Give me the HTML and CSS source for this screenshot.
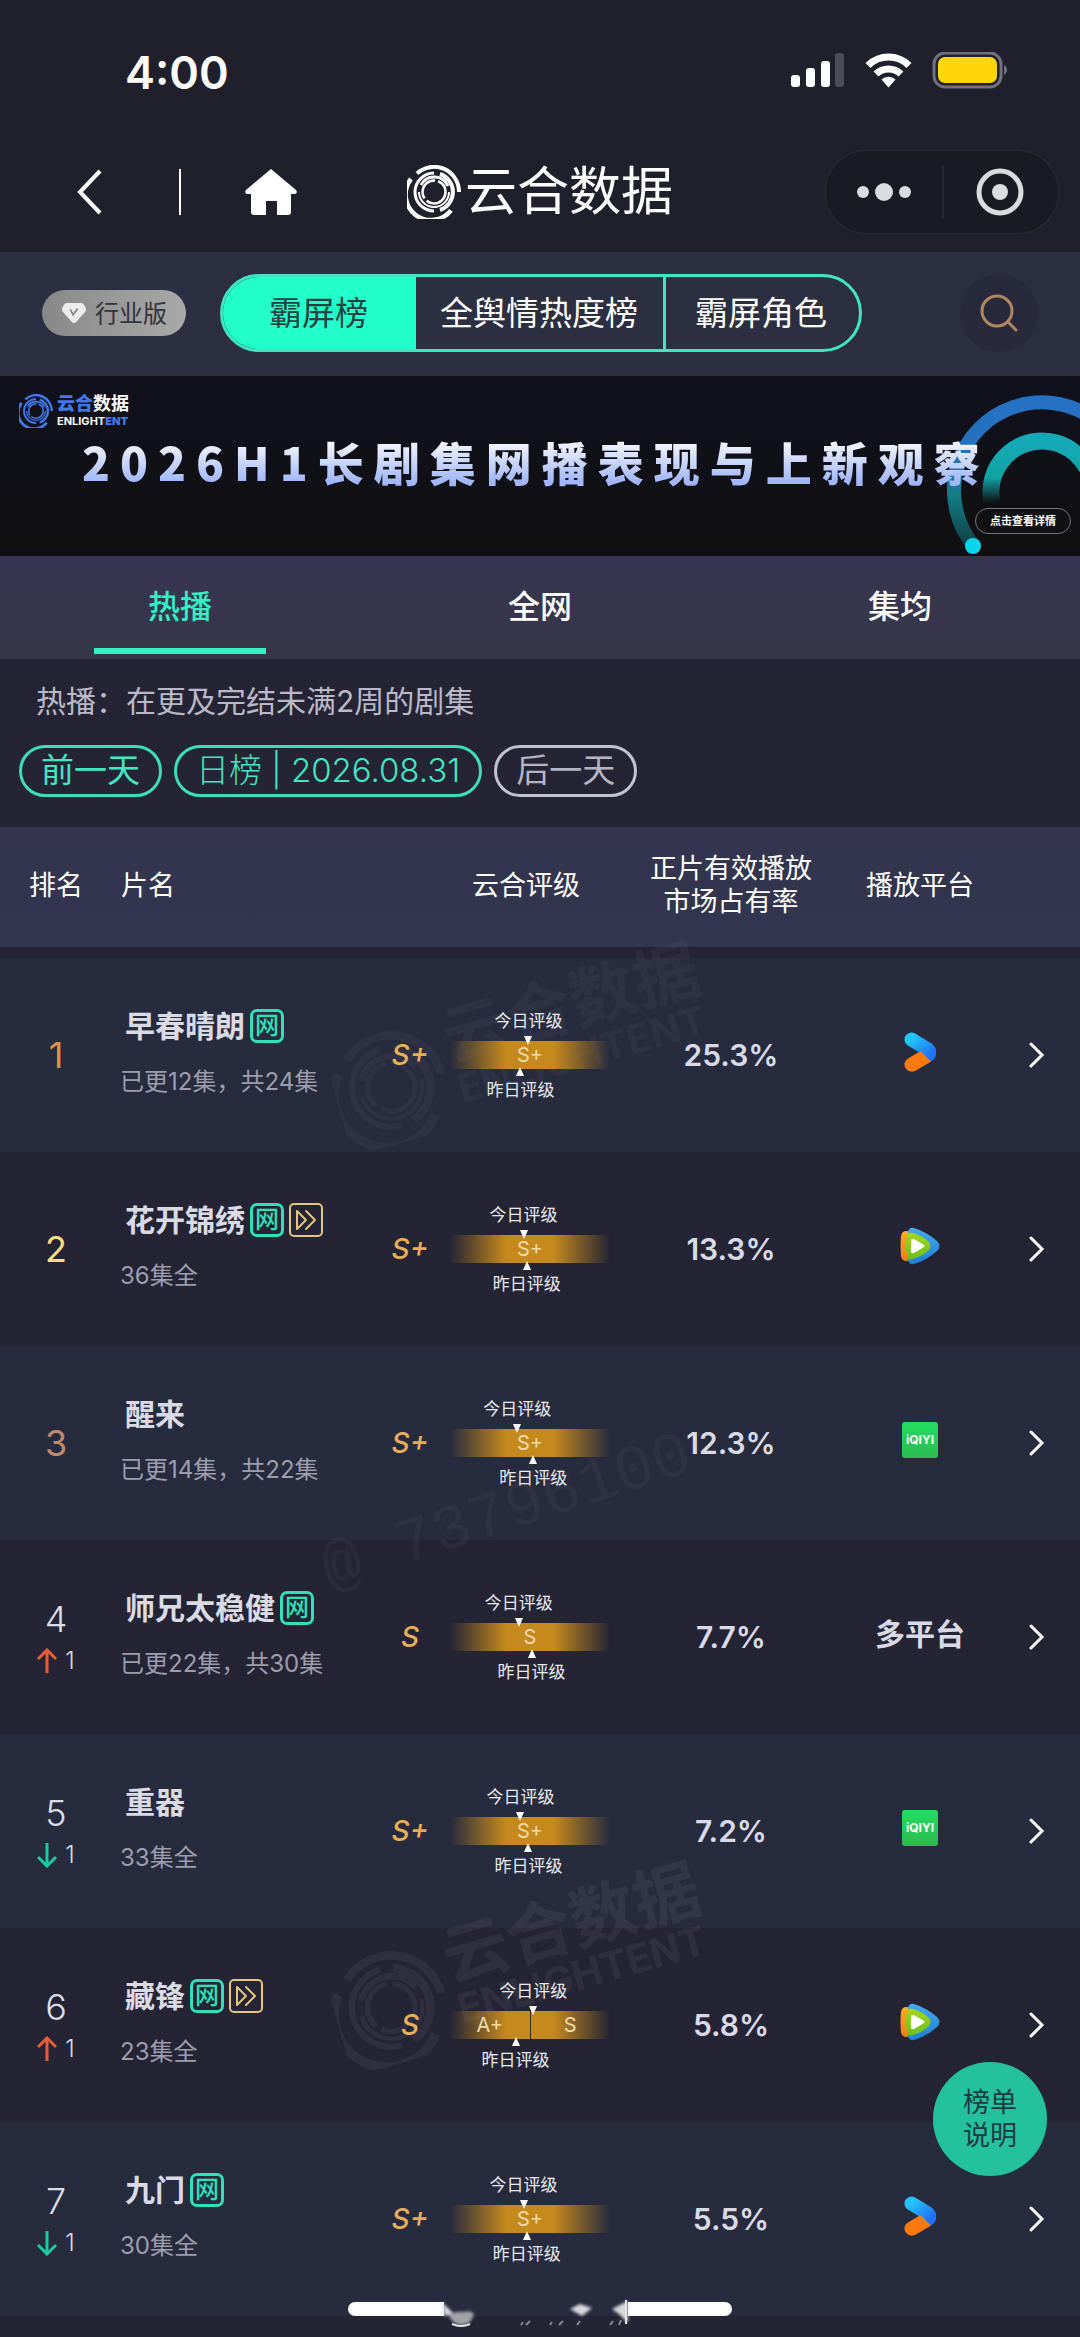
FILE: index.html
```html
<!DOCTYPE html>
<html lang="zh-CN">
  <head>
    <meta charset="utf-8">
    <meta name="viewport" content="width=device-width, initial-scale=1">
    <title>云合数据 | 霸屏榜</title>
    <link rel="stylesheet" href="styles.css">
  </head>
  <body>
    <!-- shared icons -->
    <svg class="sprite" aria-hidden="true">
      <defs>
        <linearGradient id="yk-blue" x1="0" y1="0" x2="1" y2="1">
          <stop offset="0" stop-color="#22c3f8"/>
          <stop offset="1" stop-color="#2172fb"/>
        </linearGradient>
        <linearGradient id="tx-blue" x1="0" y1="0" x2="0" y2="1">
          <stop offset="0" stop-color="#48a9ea"/>
          <stop offset="1" stop-color="#1c7fd6"/>
        </linearGradient>
        <linearGradient id="tx-green" x1="0" y1="0" x2="0" y2="1">
          <stop offset="0" stop-color="#a6d71c"/>
          <stop offset="1" stop-color="#6cbf1d"/>
        </linearGradient>
        <linearGradient id="tx-orange" x1="0" y1="0" x2="0" y2="1">
          <stop offset="0" stop-color="#ffae1c"/>
          <stop offset="1" stop-color="#f5791c"/>
        </linearGradient>
      </defs>
      <symbol id="logo" viewBox="0 0 54 54">
        <g fill="none" stroke="currentColor">
          <path d="M10 8.500A25 25 0 0 1 52 27" stroke-width="4"/>
          <path d="M4 14A25 25 0 0 0 44 45.300" stroke-width="4.500"/>
          <path d="M27 8A19 19 0 1 0 27 46" stroke-width="3"/>
          <path d="M33 9A19 19 0 0 1 33 45" stroke-width="4"/>
          <path d="M14 20A15 15 0 0 1 41 21" stroke-width="3"/>
          <path d="M42 27A15 15 0 0 1 12 27" stroke-width="2"/>
          <circle cx="27" cy="27" r="11.500" stroke-width="2.500" stroke-dasharray="26 3"/>
        </g>
      </symbol>
      <symbol id="youku" viewBox="0 0 32 40">
        <path d="M7.500 32.500L22 24" stroke="#ff7a0c" stroke-width="14" stroke-linecap="round"/>
        <path d="M7.500 7.500L24 17.500Q27 21 24 23" fill="none" stroke="url(#yk-blue)" stroke-width="14" stroke-linecap="round" stroke-linejoin="round"/>
        <path d="M7.500 25.500L17 19.500L27 29.500L11 39Q7 40 4 38Q-2 32 3 28z" fill="#ff7a0c"/>
      </symbol>
      <symbol id="tencent" viewBox="0 0 40 38">
        <path d="M1 9Q2 4 6 4q8 0 12 6v18q-4 6-12 6Q2 34 1 29Q0 19 1 9z" fill="url(#tx-orange)"/>
        <path d="M8 5Q9 0 14 1q13 4 23 13q5 5 0 10q-10 9-23 13q-5 1-6-4Q6 19 8 5z" fill="url(#tx-blue)"/>
        <path d="M7 9Q8 4 13 6q10 3 16 9q3 4 0 8q-6 6-16 9q-5 2-6-3Q5 19 7 9z" fill="url(#tx-green)"/>
        <path d="M11 14q0-3 3-2l10 6q1 1 0 2l-10 6q-3 1-3-2z" fill="#fff"/>
      </symbol>
      <symbol id="ff" viewBox="0 0 34 34">
        <rect x="1" y="1" width="32" height="32" rx="4" fill="none" stroke="#e5c679" stroke-width="2"/>
        <path d="M8 8v18l9-9zM17 8l9 9-9 9" fill="none" stroke="#e5c679" stroke-width="2" stroke-linejoin="round" stroke-linecap="round"/>
      </symbol>
      <symbol id="up" viewBox="0 0 20 26">
        <path d="M10 25V2M1 11l9-9 9 9" fill="none" stroke="#e75e34" stroke-width="3"/>
      </symbol>
      <symbol id="down" viewBox="0 0 20 26">
        <path d="M10 1v23M1 15l9 9 9-9" fill="none" stroke="#1dcba1" stroke-width="3"/>
      </symbol>
      <symbol id="next" viewBox="0 0 16 26">
        <path d="M2 2l11 11L2 24" fill="none" stroke="#fff" stroke-width="3" stroke-linecap="round"/>
      </symbol>
    </svg>

    <header class="top">
      <div class="status">
        <span class="clock">4:00</span>
        <svg class="status-icons" width="220" height="40" viewBox="0 0 220 40">
          <g fill="#fff">
            <rect x="1" y="23" width="9" height="12" rx="3"/>
            <rect x="16" y="16" width="9" height="19" rx="3"/>
            <rect x="31" y="9" width="9" height="26" rx="3"/>
            <rect x="45" y="1" width="9" height="34" rx="3" fill="#4c4c56"/>
          </g>
          <g fill="none" stroke="#fff" stroke-width="7">
            <path d="M78 13.500a29 29 0 0 1 41 0"/>
            <path d="M86 22a18 18 0 0 1 25 0"/>
          </g>
          <path d="M98.500 35.500l-7-8a10 10 0 0 1 14 0z" fill="#fff"/>
          <rect x="144" y="1" width="67" height="34" rx="11" fill="none" stroke="#71717c" stroke-width="3"/>
          <rect x="148" y="5" width="59" height="26" rx="7" fill="#ffd60a"/>
          <path d="M214 13c4 2 4 8 0 10z" fill="#71717c"/>
        </svg>
      </div>
      <nav class="nav">
        <button class="icon-btn back" aria-label="返回">
          <svg width="28" height="48" viewBox="0 0 28 48"><path d="M24 3L4 24l20 21" fill="none" stroke="#fff" stroke-width="4"/></svg>
        </button>
        <span class="nav-line"></span>
        <button class="icon-btn home" aria-label="首页">
          <svg width="52" height="46" viewBox="0 0 52 46"><path d="M26 0L51 21Q53 24 50 25H46V43Q46 46 43 46H32V32H21V46H9Q6 46 6 43V25H2Q-1 24 1 21z" fill="#fff"/></svg>
        </button>
        <h1 class="brand"><svg class="brand-logo"><use href="#logo"/></svg>云合数据</h1>
        <div class="capsule">
          <button class="icon-btn" aria-label="更多">
            <svg width="54" height="20" viewBox="0 0 54 20" fill="#dcdce0"><circle cx="6" cy="10" r="6"/><circle cx="27" cy="10" r="9"/><circle cx="48" cy="10" r="6"/></svg>
          </button>
          <button class="icon-btn" aria-label="关闭">
            <svg width="48" height="48" viewBox="0 0 48 48"><circle cx="24" cy="24" r="21" fill="none" stroke="#dcdce0" stroke-width="5"/><circle cx="24" cy="24" r="8" fill="#dcdce0"/></svg>
          </button>
        </div>
      </nav>
    </header>

    <div class="toolbar">
      <button class="edition">
        <svg width="26" height="22" viewBox="0 0 28 24"><path d="M6 1h16q2 0 3 2l2 4q1 2-1 4L16 22q-2 2-4 0L2 11q-2-2-1-4l2-4q1-2 3-2z" fill="#ececec"/><path d="M10 8l3 6 5-7" fill="none" stroke="#888" stroke-width="2"/></svg>
        <span>行业版</span>
      </button>
      <div class="segment">
        <button class="seg seg-on">霸屏榜</button>
        <button class="seg">全舆情热度榜</button>
        <button class="seg">霸屏角色</button>
      </div>
      <button class="search" aria-label="搜索">
        <svg width="38" height="38" viewBox="0 0 38 38"><g fill="none" stroke="#b18761" stroke-width="3" stroke-linecap="round"><circle cx="17" cy="17" r="15"/><path d="M28 28l8 8"/></g></svg>
      </button>
    </div>

    <a class="banner" href="#">
      <svg class="banner-art" width="140" height="178" viewBox="0 0 140 178">
        <defs>
          <linearGradient id="arc1" x1="0" y1="0" x2="0" y2="1">
            <stop offset="0" stop-color="#2571c4"/>
            <stop offset=".4" stop-color="#2472bb"/>
            <stop offset=".65" stop-color="#137d86"/>
            <stop offset="1" stop-color="#0f3f44"/>
          </linearGradient>
          <linearGradient id="arc2" x1="0" y1="0" x2="0" y2="1">
            <stop offset="0" stop-color="#16aab9"/>
            <stop offset=".6" stop-color="#10a3a3"/>
            <stop offset="1" stop-color="#111417"/>
          </linearGradient>
        </defs>
        <path d="M33 169A88 88 0 1 1 190 115" fill="none" stroke="url(#arc1)" stroke-width="14"/>
        <path d="M52 126A51 51 0 1 1 153 116" fill="none" stroke="url(#arc2)" stroke-width="17"/>
        <circle cx="33" cy="170" r="8" fill="#09d6ee"/>
      </svg>
      <div class="banner-brand">
        <svg class="banner-logo"><use href="#logo"/></svg>
        <div>
          <div class="banner-name"><b>云合</b>数据</div>
          <div class="banner-en">ENLIGHT<b>ENT</b></div>
        </div>
      </div>
      <h2 class="banner-title">2026H1长剧集网播表现与上新观察</h2>
      <span class="banner-more">点击查看详情</span>
    </a>

    <div class="tabs">
      <button class="tab tab-on">热播</button>
      <button class="tab">全网</button>
      <button class="tab">集均</button>
    </div>

    <div class="filter">
      <p class="note">热播：在更及完结未满2周的剧集</p>
      <div class="days">
        <button class="pill">前一天</button>
        <button class="pill pill-date">日榜 | 2026.08.31</button>
        <button class="pill pill-off">后一天</button>
      </div>
    </div>

    <main class="board">
      <!-- watermark behind the list text -->
      <div class="marks" aria-hidden="true">
        <div class="mark mark-a"><svg><use href="#logo"/></svg><div class="mark-text">云合数据<small>ENLIGHTENT</small></div></div>
        <div class="mark-id">@ 73796100</div>
        <div class="mark mark-b"><svg><use href="#logo"/></svg><div class="mark-text">云合数据<small>ENLIGHTENT</small></div></div>
      </div>

      <table class="rank">
        <colgroup>
          <col class="c-rank"><col><col class="c-grade"><col class="c-share"><col class="c-site"><col class="c-more">
        </colgroup>
        <thead>
          <tr>
            <th>排名</th>
            <th class="th-name">片名</th>
            <th class="th-grade">云合评级</th>
            <th>正片有效播放<br>市场占有率</th>
            <th>播放平台</th>
            <th></th>
          </tr>
        </thead>
        <tbody>
          <tr>
            <td class="no no-1">1</td>
            <td><div class="name">早春晴朗<i class="net">网</i></div><div class="eps">已更12集，共24集</div></td>
            <td><div class="grade"><em>S+</em><div class="meter"><span class="today" style="left: 49%">今日评级</span><div class="bar"><span>S+</span></div><span class="yest" style="left: 44%">昨日评级</span></div></div></td>
            <td class="share">25.3%</td>
            <td class="site"><svg class="yk"><use href="#youku"/></svg></td>
            <td><svg class="go"><use href="#next"/></svg></td>
          </tr>
          <tr>
            <td class="no no-2">2</td>
            <td><div class="name">花开锦绣<i class="net">网</i><svg class="ff"><use href="#ff"/></svg></div><div class="eps">36集全</div></td>
            <td><div class="grade"><em>S+</em><div class="meter"><span class="today" style="left: 46%">今日评级</span><div class="bar"><span>S+</span></div><span class="yest" style="left: 48%">昨日评级</span></div></div></td>
            <td class="share">13.3%</td>
            <td class="site"><svg class="tx"><use href="#tencent"/></svg></td>
            <td><svg class="go"><use href="#next"/></svg></td>
          </tr>
          <tr>
            <td class="no no-3">3</td>
            <td><div class="name">醒来</div><div class="eps">已更14集，共22集</div></td>
            <td><div class="grade"><em>S+</em><div class="meter"><span class="today" style="left: 42%">今日评级</span><div class="bar"><span>S+</span></div><span class="yest" style="left: 52%">昨日评级</span></div></div></td>
            <td class="share">12.3%</td>
            <td class="site"><span class="iqiyi">iQIYI</span></td>
            <td><svg class="go"><use href="#next"/></svg></td>
          </tr>
          <tr>
            <td class="no">4<div class="move"><svg><use href="#up"/></svg>1</div></td>
            <td><div class="name">师兄太稳健<i class="net">网</i></div><div class="eps">已更22集，共30集</div></td>
            <td><div class="grade"><em>S</em><div class="meter"><span class="today" style="left: 43%">今日评级</span><div class="bar"><span>S</span></div><span class="yest" style="left: 51%">昨日评级</span></div></div></td>
            <td class="share">7.7%</td>
            <td class="site">多平台</td>
            <td><svg class="go"><use href="#next"/></svg></td>
          </tr>
          <tr>
            <td class="no">5<div class="move"><svg><use href="#down"/></svg>1</div></td>
            <td><div class="name">重器</div><div class="eps">33集全</div></td>
            <td><div class="grade"><em>S+</em><div class="meter"><span class="today" style="left: 44%">今日评级</span><div class="bar"><span>S+</span></div><span class="yest" style="left: 49%">昨日评级</span></div></div></td>
            <td class="share">7.2%</td>
            <td class="site"><span class="iqiyi">iQIYI</span></td>
            <td><svg class="go"><use href="#next"/></svg></td>
          </tr>
          <tr>
            <td class="no">6<div class="move"><svg><use href="#up"/></svg>1</div></td>
            <td><div class="name">藏锋<i class="net">网</i><svg class="ff"><use href="#ff"/></svg></div><div class="eps">23集全</div></td>
            <td><div class="grade"><em>S</em><div class="meter"><span class="today" style="left: 52%">今日评级</span><div class="bar bar-split"><span>A+</span><span>S</span></div><span class="yest" style="left: 41%">昨日评级</span></div></div></td>
            <td class="share">5.8%</td>
            <td class="site"><svg class="tx"><use href="#tencent"/></svg></td>
            <td><svg class="go"><use href="#next"/></svg></td>
          </tr>
          <tr>
            <td class="no">7<div class="move"><svg><use href="#down"/></svg>1</div></td>
            <td><div class="name">九门<i class="net">网</i></div><div class="eps">30集全</div></td>
            <td><div class="grade"><em>S+</em><div class="meter"><span class="today" style="left: 46%">今日评级</span><div class="bar"><span>S+</span></div><span class="yest" style="left: 48%">昨日评级</span></div></div></td>
            <td class="share">5.5%</td>
            <td class="site"><svg class="yk"><use href="#youku"/></svg></td>
            <td><svg class="go"><use href="#next"/></svg></td>
          </tr>
        </tbody>
      </table>
    </main>

    <button class="explain">榜单<br>说明</button>

    <svg class="home-bar" width="384" height="36" viewBox="0 0 384 36" aria-hidden="true">
      <defs><filter id="soft"><feGaussianBlur stdDeviation="1.500"/></filter></defs>
      <path d="M7 8h89v14H7a7 7 0 0 1 0-14z" fill="#fff"/>
      <path d="M280 8h97a7 7 0 0 1 0 14h-97z" fill="#fff"/>
      <g filter="url(#soft)" fill="#d8d8dc">
        <path d="M94 8l12 12-10 2z"/>
        <path d="M101 22q6-5 14-4 8-2 11 2-3 11-12 11-9 0-13-9z" fill="#a0a1a6"/>
        <path d="M222 15l10-5 12 4-10 8z"/>
        <path d="M264 15l16-8v22l-9-9z"/>
      </g>
      <path d="M104 30q9 4 18 0M278 6v24" fill="none" stroke="#e4e4e8" stroke-width="2"/>
      <path d="M173 31l2-3M178 31l4-4M202 31l2-3M211 31l4-4M229 31l3-4M262 31l3-4M271 31l2-5" stroke="#8a8a92" stroke-width="2"/>
    </svg>
  </body>
</html>
```
FILE: styles.css
```css
html, body {
  margin: 0;
  padding: 0;
}
body {
  min-height: 100vh;
  background: #242435;
  color: #fff;
  font-family: Inter, "Noto Sans CJK SC", sans-serif;
}
button {
  margin: 0;
  padding: 0;
  border: 0;
  background: none;
  color: inherit;
  font-family: inherit;
}
.sprite {
  position: absolute;
  width: 0;
  height: 0;
}
.icon-btn {
  display: flex;
  align-items: center;
  justify-content: center;
}

/* header */
.top {
  background: #20202c;
}
.status {
  display: flex;
  justify-content: space-between;
  align-items: center;
  height: 144px;
  padding: 0 70px 0 125px;
}
.clock {
  font-size: 45px;
  font-weight: 600;
}
.nav {
  display: flex;
  align-items: center;
  height: 96px;
  padding: 0 20px 12px 76px;
}
.nav-line {
  width: 2px;
  height: 46px;
  margin: 0 64px 0 75px;
  background: #fff;
}
.brand {
  display: flex;
  align-items: center;
  gap: 4px;
  margin: 0 auto 0 110px;
  font-size: 52px;
  line-height: 60px;
  font-weight: 400;
}
.brand-logo {
  width: 54px;
  height: 54px;
}
.capsule {
  display: flex;
  width: 236px;
  height: 86px;
  box-sizing: border-box;
  border: 2px solid #262631;
  border-radius: 43px;
  background: #1a1a22;
}
.capsule .icon-btn {
  flex: 1;
}
.capsule .icon-btn + .icon-btn {
  position: relative;
}
.capsule .icon-btn + .icon-btn::before {
  content: "";
  position: absolute;
  left: 0;
  top: 14px;
  bottom: 14px;
  width: 2px;
  background: #282832;
}

/* board switch */
.toolbar {
  display: flex;
  align-items: center;
  height: 122px;
  padding: 0 42px 2px;
  background: #2c2f41;
}
.edition {
  display: flex;
  align-items: center;
  justify-content: center;
  gap: 8px;
  width: 144px;
  height: 46px;
  border-radius: 23px;
  background: linear-gradient(90deg, #888, #a9a9a9);
  color: #32333c;
  font-size: 24px;
}
.edition span {
  padding-bottom: 4px;
}
.segment {
  display: flex;
  height: 78px;
  margin: 0 auto 0 34px;
  box-sizing: border-box;
  border: 3px solid #3fe6c0;
  border-radius: 39px;
  overflow: hidden;
}
.seg {
  padding: 0 25px 4px 24px;
  font-size: 33px;
}
.seg + .seg + .seg {
  padding: 0 32px 4px 29px;
  border-left: 3px solid #3fe6c0;
}
.seg-on {
  padding: 0 48px 4px 46px;
  background: #22ffca;
  color: #23423f;
}
.search {
  display: flex;
  align-items: center;
  justify-content: center;
  width: 78px;
  height: 78px;
  border-radius: 50%;
  background: #282a3b;
}

/* banner */
.banner {
  display: block;
  position: relative;
  height: 180px;
  overflow: hidden;
  background: linear-gradient(#10111d, #101011);
  color: #fff;
  text-decoration: none;
}
.banner-art {
  position: absolute;
  right: 0;
  top: 0;
}
.banner-brand {
  display: flex;
  align-items: center;
  gap: 4px;
  padding: 18px 0 0 19px;
}
.banner-logo {
  width: 34px;
  height: 34px;
  color: #4179ea;
}
.banner-name {
  font-size: 18px;
  line-height: 20px;
  font-weight: 700;
}
.banner-en {
  font-size: 11px;
  line-height: 14px;
  font-weight: 700;
}
.banner-brand b {
  color: #4179ea;
}
.banner-title {
  position: relative;
  margin: 3px 0 0;
  padding-left: 82px;
  font-family: "Noto Sans CJK SC", sans-serif;
  font-size: 46px;
  line-height: 60px;
  font-weight: 900;
  letter-spacing: 10px;
  white-space: nowrap;
  color: transparent;
  background: linear-gradient(#fff 10%, #a0b6f8 85%);
  -webkit-background-clip: text;
  background-clip: text;
}
.banner-more {
  position: absolute;
  right: 9px;
  bottom: 22px;
  width: 96px;
  box-sizing: border-box;
  border: 1px solid #777;
  border-radius: 13px;
  background: #111114;
  font-size: 11px;
  line-height: 24px;
  font-weight: 700;
  text-align: center;
}

/* tabs */
.tabs {
  display: flex;
  height: 103px;
  background: linear-gradient(#373552, #363649);
}
.tab {
  flex: 1;
  position: relative;
  padding-bottom: 8px;
  font-size: 32px;
  font-weight: 500;
}
.tab-on {
  color: #33efc4;
}
.tab-on::after {
  content: "";
  position: absolute;
  left: 50%;
  bottom: 5px;
  width: 172px;
  height: 6px;
  margin-left: -86px;
  background: #33efc4;
}

/* date filter */
.filter {
  padding: 20px 19px 30px;
  background: #242435;
}
.note {
  margin: 0;
  padding-left: 17px;
  color: #b9b9c8;
  font-size: 30px;
  line-height: 44px;
  font-weight: 400;
}
.days {
  display: flex;
  gap: 12px;
  margin-top: 22px;
}
.pill {
  height: 52px;
  padding: 0 19px 2px;
  border: 3px solid #3fdcb9;
  border-radius: 26px;
  color: #43e6c2;
  font-size: 33px;
  line-height: 44px;
  font-weight: 400;
}
.pill-date {
  font-weight: 300;
}
.pill-off {
  border-color: #c3c2d2;
  color: #b4b4c2;
}

/* ranking */
.board {
  position: relative;
  overflow: hidden;
  padding-bottom: 21px;
}
.rank {
  width: 100%;
  table-layout: fixed;
  border-spacing: 0;
}
.c-rank {
  width: 112px;
}
.c-grade {
  width: 280px;
}
.c-share {
  width: 162px;
}
.c-site {
  width: 216px;
}
.c-more {
  width: 52px;
}
.rank th {
  height: 116px;
  padding: 0 0 4px;
  border-bottom: 11px solid #242435;
  background: linear-gradient(#34344e, #323650);
  font-size: 27px;
  line-height: 33px;
  font-weight: 400;
  white-space: nowrap;
}
.rank .th-name {
  padding-left: 9px;
  text-align: left;
}
.rank .th-grade {
  padding-left: 32px;
}
.rank td {
  height: 194px;
  padding: 0;
}
.rank tbody tr:nth-child(odd) {
  background: #272b3e;
}
.no {
  font-size: 36px;
  line-height: 42px;
  font-weight: 300;
  text-align: center;
  color: #dcdce6;
}
.no-1, .no-2, .no-3 {
  font-weight: 400;
}
.no-1 {
  color: #dc9449;
}
.no-2 {
  color: #f7dd81;
}
.no-3 {
  color: #c08a6c;
}
.move {
  display: flex;
  align-items: center;
  justify-content: center;
  gap: 8px;
  margin-bottom: -6px;
  font-size: 24px;
}
.move svg {
  width: 20px;
  height: 26px;
}
.name {
  display: flex;
  align-items: center;
  gap: 5px;
  padding-left: 13px;
  color: #dadae4;
  font-size: 30px;
  line-height: 44px;
  font-weight: 700;
}
.net {
  width: 28px;
  height: 28px;
  border: 3px solid #2fe0b8;
  border-radius: 7px;
  color: #2fe0b8;
  font-size: 24px;
  line-height: 28px;
  font-style: normal;
  font-weight: 500;
  text-align: center;
}
.ff {
  width: 34px;
  height: 34px;
}
.eps {
  padding: 16px 0 6px 8px;
  color: #9d9dad;
  font-size: 24px;
  line-height: 36px;
  font-weight: 400;
}
.grade {
  display: flex;
  align-items: center;
}
.grade em {
  width: 80px;
  color: #e8ae57;
  font-size: 28px;
  font-weight: 500;
  text-align: center;
}
.meter {
  position: relative;
  width: 160px;
}
.bar {
  display: flex;
  height: 28px;
  background: linear-gradient(90deg, #c5891d00, #c5891d 35%, #c5891d 65%, #c5891d00);
  color: #efdcae;
  font-size: 20px;
  line-height: 28px;
  text-align: center;
}
.bar span {
  flex: 1;
}
.bar-split span + span {
  border-left: 1px solid #3a2c1c;
}
/* day labels point at the bar */
.today, .yest {
  position: absolute;
  transform: translateX(-50%);
  color: #e9e9f0;
  font-size: 17px;
  line-height: 24px;
  white-space: nowrap;
}
.today {
  bottom: 36px;
}
.yest {
  top: 37px;
}
.today::after, .yest::before {
  content: "";
  position: absolute;
  left: 50%;
  margin-left: -4px;
  border: 4px solid transparent;
}
.today::after {
  top: 27px;
  border-top: 9px solid #fff;
  border-bottom: 0;
}
.yest::before {
  bottom: 26px;
  border-bottom: 9px solid #fff;
  border-top: 0;
}
.share {
  color: #dadae6;
  font-size: 30px;
  font-weight: 600;
  text-align: center;
}
.site {
  color: #dadae6;
  font-size: 30px;
  line-height: 36px;
  font-weight: 700;
  text-align: center;
}
.rank .site {
  height: 188px;
  padding-bottom: 6px;
}
.site svg, .go {
  display: block;
  margin: 0 auto;
}
.site .yk {
  width: 32px;
  height: 40px;
}
.site .tx {
  width: 40px;
  height: 38px;
}
.iqiyi {
  display: block;
  width: 36px;
  margin: 0 auto;
  border-radius: 3px;
  background: linear-gradient(#23dd5f, #2bbb50);
  color: #fff;
  font-size: 12px;
  line-height: 36px;
  font-weight: 700;
}
.go {
  width: 16px;
  height: 26px;
  margin-left: 1px;
}

/* watermark */
.marks {
  position: absolute;
  left: 0;
  right: 0;
  top: 120px;
  bottom: 0;
  opacity: .05;
  pointer-events: none;
}
.mark {
  position: absolute;
  left: 330px;
  display: flex;
  align-items: center;
  gap: 8px;
  transform: rotate(-16deg);
}
.mark svg {
  width: 112px;
  height: 112px;
}
.mark-a {
  top: 36px;
  opacity: .6;
}
.mark-b {
  top: 956px;
}
.mark-text {
  padding-bottom: 28px;
  font-size: 66px;
  line-height: 70px;
  font-weight: 700;
}
.mark-text small {
  display: block;
  font-size: 40px;
  line-height: 36px;
}
.mark-id {
  position: absolute;
  left: 315px;
  top: 530px;
  font-family: "Liberation Mono", monospace;
  font-size: 64px;
  transform: rotate(-18deg);
  opacity: .6;
}

/* floating */
.explain {
  position: fixed;
  right: 33px;
  bottom: 161px;
  width: 114px;
  height: 114px;
  border-radius: 50%;
  background: #23c29d;
  color: #1d3a44;
  font-size: 27px;
  line-height: 33px;
}
.home-bar {
  position: fixed;
  left: 50%;
  bottom: 7px;
  margin-left: -192px;
}
```
